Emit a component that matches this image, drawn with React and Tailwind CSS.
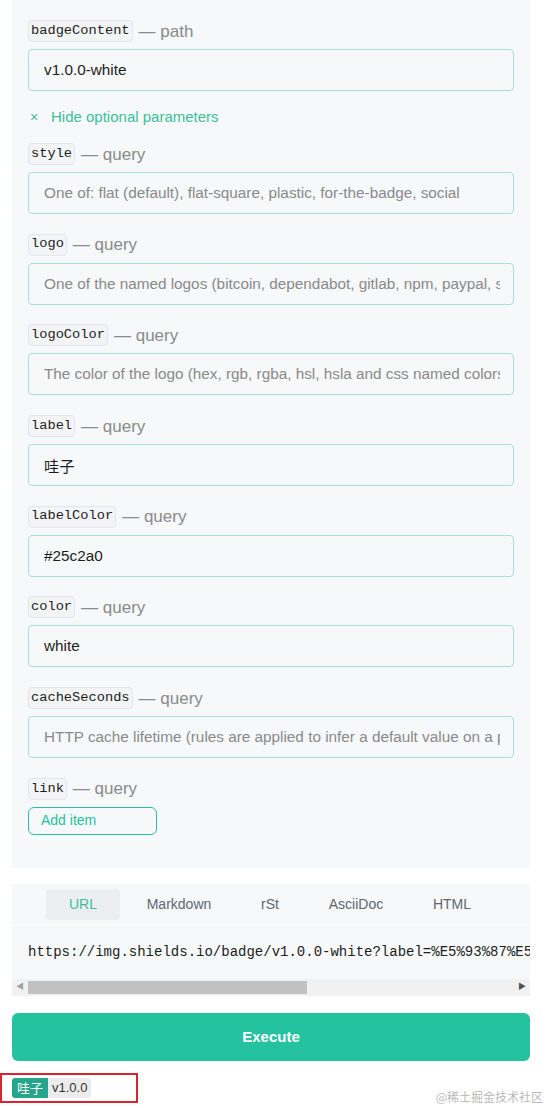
const fields = [
  { name: 'style', placeholder: 'One of: flat (default), flat-square, plastic, for-the-badge, social' },
  { name: 'logo', placeholder: 'One of the named logos (bitcoin, dependabot, gitlab, npm, paypal, serverfault, stackexchange, superuser, telegram, travis) or simple-icons' },
  { name: 'logoColor', placeholder: 'The color of the logo (hex, rgb, rgba, hsl, hsla and css named colors supported)' },
  { name: 'label', value: '哇子' },
  { name: 'labelColor', value: '#25c2a0' },
  { name: 'color', value: 'white' },
  { name: 'cacheSeconds', placeholder: 'HTTP cache lifetime (rules are applied to infer a default value on a per-badge basis)' },
];

const tabs = ['URL', 'Markdown', 'rSt', 'AsciiDoc', 'HTML'];

function ParamLabel({ name, kind }) {
  return (
    <div className="flex items-center gap-[6px] h-[22px]">
      <code className="h-[22px] px-[2px] flex items-center rounded-[4px] border border-[#e4e6ea] bg-[#f2f4f6] text-[13.7px] text-[#1c1e21] font-['Liberation_Mono',monospace]">
        {name}
      </code>
      <span className="text-[17px] text-[#8b8b8b] leading-none">— {kind}</span>
    </div>
  );
}

function Field({ name, kind = 'query', value, placeholder }) {
  return (
    <div className="flex flex-col gap-[7px]">
      <ParamLabel name={name} kind={kind} />
      <input
        readOnly
        defaultValue={value}
        placeholder={placeholder}
        className="h-[42px] w-full rounded-[4px] border border-[#a6e2d2] bg-[#f6f8fa] pl-[15px] pr-[13px] text-[15.3px] text-[#1c1e21] placeholder:text-[#8a8a8a] outline-none font-['Liberation_Sans','Noto_Sans_CJK_SC',sans-serif]"
      />
    </div>
  );
}

export default function App() {
  return (
    <div className="w-[547px] h-[1108px] bg-white relative overflow-hidden font-['Liberation_Sans','Noto_Sans_CJK_SC',sans-serif]">
      <div className="mx-[12px] w-[518px] bg-[#f6f8fa] px-[16px] pt-[20px] pb-[33px] flex flex-col">
        <Field name="badgeContent" kind="path" value="v1.0.0-white" />
        <div className="flex items-center h-[22px] mt-[15px] mb-[15px] text-[15px] text-[#3cbf9c]">
          <span className="ml-[2px] w-[21px] text-[14px]">×</span>
          <span>Hide optional parameters</span>
        </div>
        <div className="flex flex-col gap-[19.7px]">
          {fields.map((f) => (
            <Field key={f.name} {...f} />
          ))}
          <div className="flex flex-col gap-[7px]">
            <ParamLabel name="link" kind="query" />
            <button className="w-[129px] h-[28px] rounded-[6px] border border-[#25c2a0] bg-[#f6f8fa] text-left pl-[12px] text-[14px] text-[#25c2a0]">
              Add item
            </button>
          </div>
        </div>
      </div>

      <div className="mx-[12px] mt-[16px] w-[518px] bg-[#f6f8fa]">
        <div className="h-[42px] flex items-center border-b border-[#ffffff]">
          {tabs.map((t, i) => (
            <div
              key={t}
              className={
                i === 0
                  ? 'ml-[34px] w-[74px] h-[31px] rounded-[4px] bg-[#eceef1] flex items-center justify-center text-[14px] text-[#3cbf9c]'
                  : 'h-[31px] flex items-center justify-center text-[14px] text-[#606770]'
              }
              style={i === 0 ? undefined : { width: [0, 118, 64, 108, 84][i] }}
            >
              {t}
            </div>
          ))}
        </div>
        <div className="h-[53px] pl-[16px] flex items-center overflow-hidden whitespace-nowrap text-[14px] text-[#1c1e21] font-['Liberation_Mono',monospace]">
          https://img.shields.io/badge/v1.0.0-white?label=%E5%93%87%E5%AD%90&amp;labelColor=%2325c2a0
        </div>
        <div className="h-[17px] flex items-center bg-[#f1f1f1]">
          <span className="w-[16px] flex justify-center text-[8px] text-[#a3a3a3]">◀</span>
          <div className="w-[279px] h-[13px] bg-[#c1c1c1]" />
          <div className="flex-1" />
          <span className="w-[16px] flex justify-center text-[8px] text-[#505050]">▶</span>
        </div>
      </div>

      <button className="mx-[12px] mt-[17px] w-[518px] h-[48px] rounded-[6px] bg-[#25c2a0] text-white text-[15px] font-bold flex items-center justify-center">
        Execute
      </button>

      <div className="mt-[12px] w-[138px] h-[30px] border-2 border-[#d9232d] flex items-center pl-[10px]">
        <div className="flex h-[20px] rounded-[3px] overflow-hidden text-[13px] leading-none">
          <span className="bg-[#25a58a] text-white px-[5px] flex items-center font-['Noto_Sans_CJK_SC',sans-serif]">哇子</span>
          <span className="bg-[#ececec] text-[#333] px-[4px] flex items-center">v1.0.0</span>
        </div>
      </div>

      <div className="absolute right-[4px] bottom-[2px] text-[12px] text-[#b9b9b9] font-['Noto_Sans_CJK_SC',serif]">
        @稀土掘金技术社区
      </div>
    </div>
  );
}
